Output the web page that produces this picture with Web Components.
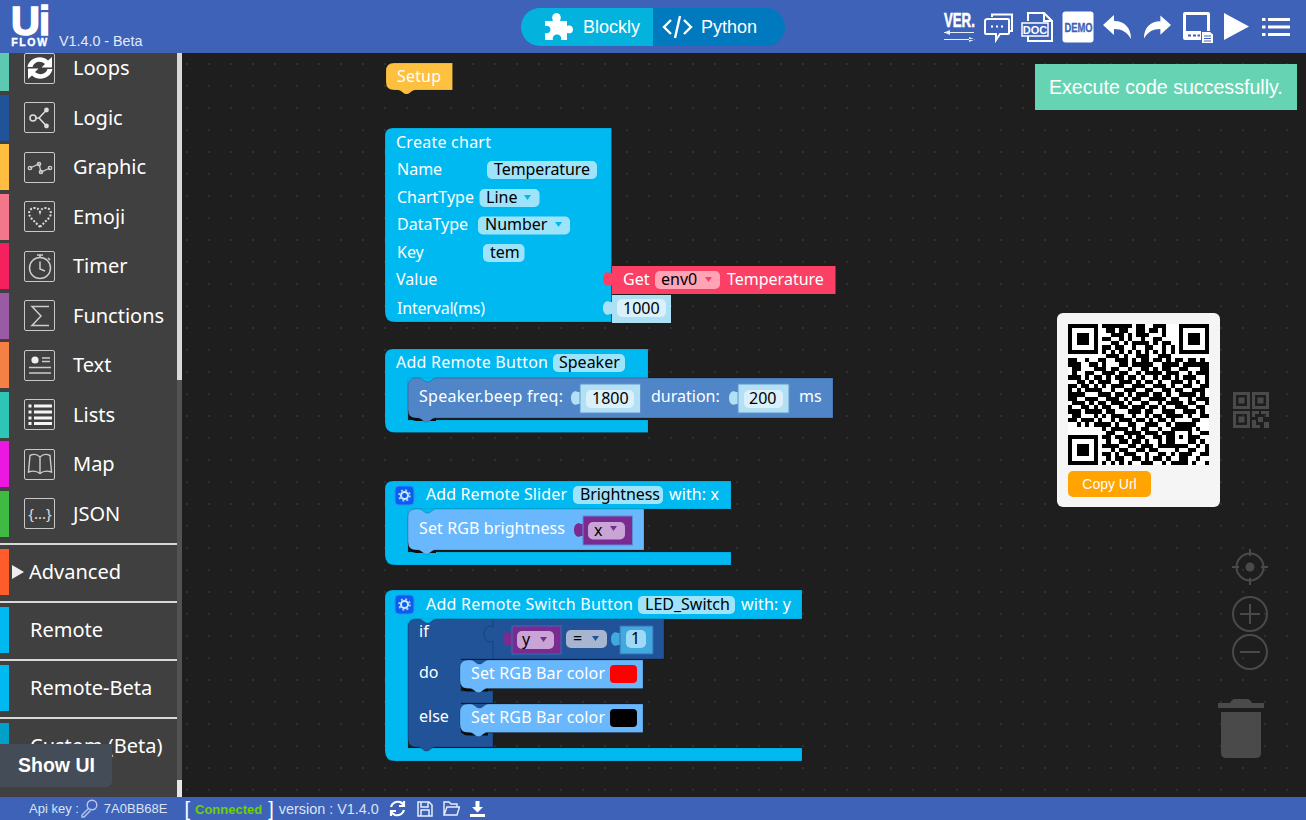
<!DOCTYPE html>
<html>
<head>
<meta charset="utf-8">
<title>UiFlow</title>
<style>
  html, body { margin: 0; height: 100%; background: #1e1e1e; overflow: hidden; }
  body { display: flex; flex-direction: column; width: 1306px; height: 820px; font-family: 'Liberation Sans', Arial, sans-serif; }
  .main { display: flex; height: 744px; }
  svg { display: block; }
</style>
</head>
<body>
<uf-header></uf-header>
<div class="main">
  <uf-sidebar>
    <tool-item color="#5cc9b0" label="Loops" first><svg viewBox="0 0 28 28" fill="none"><path d="M1.500 13 C3 4 15 0 22 6.500 L26 3 V13.500 H15.500 L19 10 C14 6 8 8 6.500 13Z M26.500 15 C25 24 13 28 6 21.500 L2 25 V14.500 H12.500 L9 18 C14 22 20 20 21.500 15Z" fill="#fff"/></svg></tool-item>
    <tool-item color="#205398" label="Logic"><svg viewBox="0 0 28 28" fill="none" stroke="#ddd" stroke-width="1.6"><circle cx="7" cy="14" r="3"/><path d="M10 14 H13 L20 6.500 M13 14 L20 21.500"/><circle cx="20.500" cy="6" r="1.600" fill="#ddd"/><circle cx="20.500" cy="22" r="1.600" fill="#ddd"/></svg></tool-item>
    <tool-item color="#ffbe3f" label="Graphic"><svg viewBox="0 0 28 28" fill="none" stroke="#ccc" stroke-width="1.3"><path d="M4 15 L13 11 L15 19 L24 15"/><circle cx="4" cy="15" r="1.700"/><circle cx="13" cy="11" r="1.700"/><circle cx="15" cy="19" r="1.700"/><circle cx="24" cy="15" r="1.700"/></svg></tool-item>
    <tool-item color="#f2778a" label="Emoji"><svg viewBox="0 0 28 28" fill="none"><path d="M14 24 L5 15 C1 10 4 5 8 5 C11 5 13 6 14 9 C15 6 17 5 20 5 C24 5 27 10 23 15Z" stroke="#ddd" stroke-width="2" stroke-dasharray="2 1.600"/></svg></tool-item>
    <tool-item color="#f5205f" label="Timer"><svg viewBox="0 0 28 28" fill="none" stroke="#ccc" stroke-width="1.500"><circle cx="14" cy="16" r="10.500"/><path d="M11 3 H17 M14 3 V5.500 M14 9.500 V17 L19 19 M22 6 L24 8"/></svg></tool-item>
    <tool-item color="#9a5ba5" label="Functions"><svg viewBox="0 0 28 28" fill="none" stroke="#ccc" stroke-width="1.500"><path d="M23 4.500 H6 L15 14 L6 23.500 H23"/></svg></tool-item>
    <tool-item color="#f58045" label="Text"><svg viewBox="0 0 28 28" fill="none" stroke="#ccc" stroke-width="1.300"><circle cx="9" cy="9" r="3.600" fill="#eee" stroke="none"/><path d="M16 7 H24 M16 10.500 H24 M3 16.500 H25 M3 22 H25"/></svg></tool-item>
    <tool-item color="#2ec4b6" label="Lists"><svg viewBox="0 0 28 28" fill="#f4f4f4"><rect x="2.500" y="3.500" width="3" height="3"/><rect x="2.500" y="9.500" width="3" height="3"/><rect x="2.500" y="15.500" width="3" height="3"/><rect x="2.500" y="21" width="3" height="3"/><rect x="8" y="3.500" width="18" height="3"/><rect x="8" y="9.500" width="18" height="3"/><rect x="8" y="15.500" width="18" height="3"/><rect x="8" y="21" width="18" height="3"/></svg></tool-item>
    <tool-item color="#ea18e0" label="Map"><svg viewBox="0 0 28 28" fill="none" stroke="#ccc" stroke-width="1.400"><path d="M14 7 C11 4 7 4 4 5.500 L2.500 22 C7 20.500 11 21 14 23.500 C17 21 21 20.500 25.500 22 L24 5.500 C21 4 17 4 14 7 V23.500"/></svg></tool-item>
    <tool-item color="#3fba42" label="JSON"><svg viewBox="0 0 28 28"><text x="14" y="19" font-size="15" font-family="'Noto Sans', sans-serif" text-anchor="middle" fill="#ddd">{...}</text></svg></tool-item>
    <cat-item color="#ff5c2b" label="Advanced" arrow></cat-item>
    <cat-item color="#00b9f0" label="Remote"></cat-item>
    <cat-item color="#00b9f0" label="Remote-Beta"></cat-item>
    <cat-item color="#00a0c8" label="Custom (Beta)"></cat-item>
  </uf-sidebar>
  <uf-workspace>
    <uf-toast>Execute code successfully.</uf-toast>
    <qr-card></qr-card>
    <zoom-controls></zoom-controls>
  </uf-workspace>
</div>
<uf-statusbar></uf-statusbar>

<script>
class UfHeader extends HTMLElement {
  constructor() {
    super();
    this.attachShadow({ mode: 'open' }).innerHTML = `
    <style>
      :host { display: flex; align-items: stretch; height: 53px; background: #3d62b8; position: relative; flex: none; color: #fff; font-family: 'Liberation Sans', sans-serif; }
      .logo { width: 38px; margin-left: 11px; display: flex; flex-direction: column; align-items: center; }
      .ui { font-size: 40px; line-height: 30px; height: 30px; margin-top: 6px; font-weight: 700; -webkit-text-stroke: 1.500px #fff; letter-spacing: -1px; }
      .flow { font-size: 10.500px; line-height: 10px; margin-top: 1px; font-weight: 700; letter-spacing: 1.700px; -webkit-text-stroke: .4px #fff; }
      .ver { font-size: 14.300px; margin-left: 10px; align-self: flex-end; padding-bottom: 4px; line-height: 16px; color: #e4eaf7; width: 89px; white-space: nowrap; }
      .tabs { display: flex; margin: 8px 0 7px 373px; height: 38px; border-radius: 19px; overflow: hidden; font-size: 18px; }
      .tab { display: flex; align-items: center; box-sizing: border-box; }
      .blockly { width: 132px; background: #03b3de; padding-left: 23px; gap: 10px; }
      .python { width: 132px; background: #0079be; padding-left: 9px; gap: 8px; }
      .tools { display: flex; align-items: center; margin-left: 158px; }
      .tools svg { flex: none; overflow: visible; }
    </style>
    <div class="logo"><span class="ui">Ui</span><span class="flow">FLOW</span></div>
    <span class="ver">V1.4.0 - Beta</span>
    <div class="tabs">
      <div class="tab blockly">
        <svg width="29" height="30" viewBox="0 0 29 30"><path d="M1 9 H9 C7 5 9 1 12.500 1 C16 1 18 5 16 9 H23 V14 C27 12.500 29 15 29 17.500 C29 21 26 22 23 21 V28 H17 C18 25 16 22.500 13 22.500 C10 22.500 8 25 9 28 H1 V21 C4 22 6.500 20 6.500 17.500 C6.500 15 4 13 1 14Z" fill="#fff"/></svg>
        <span>Blockly</span>
      </div>
      <div class="tab python">
        <svg width="31" height="24" viewBox="0 0 31 24" fill="none" stroke="#fff" stroke-width="2.400"><path d="M9 5 L2 12 L9 19 M22 5 L29 12 L22 19 M18 1 L13 23"/></svg>
        <span>Python</span>
      </div>
    </div>
    <div class="tools">
      <svg width="33" height="32" viewBox="0 0 33 32"><text transform="translate(1 15.500) scale(.66 1)" font-size="20" font-weight="700" font-family="'Liberation Sans',sans-serif" fill="#fff" stroke="#fff" stroke-width=".6">VER.</text><path d="M1 21 H31 V22 H1Z M1 21.500 L7 19 V24Z M1 28 H31 V29 H1Z M32 28.500 L26 26 V31Z" fill="#e8eefa"/></svg>
      <svg width="31" height="32" viewBox="0 0 31 32" fill="none" stroke="#fff" stroke-width="2" style="margin-left:7px"><path d="M9 6 V3.500 H29 V20 H26"/><path d="M5 8 H25 Q26 8 26 9 V22 Q26 23 25 23 H17 L13 29 V23 H3 Q2 23 2 22 V10 Q2 8 5 8Z"/><path d="M8 15.500 H10 M13 15.500 H15 M18 15.500 H20"/></svg>
      <svg width="32" height="32" viewBox="0 0 32 32" style="margin-left:8px"><path d="M6 10 V2 H22 L30 10 V30 H6 V25" fill="none" stroke="#fff" stroke-width="2"/><path d="M22 2 V10 H30" fill="none" stroke="#fff" stroke-width="2"/><rect x="0" y="12" width="26" height="13" fill="#3d62b8" stroke="#fff" stroke-width="1.500"/><text x="13" y="22.500" font-size="11" font-weight="700" font-family="'Liberation Sans',sans-serif" text-anchor="middle" fill="#fff">DOC</text></svg>
      <svg width="32" height="32" viewBox="0 0 32 32" style="margin-left:8px"><rect x=".5" y=".5" width="31" height="31" rx="3" fill="#fff"/><text transform="translate(2.500 20.500) scale(.78 1)" font-size="12" font-weight="700" font-family="'Liberation Sans',sans-serif" fill="#3d62b8" stroke="#3d62b8" stroke-width=".3">DEMO</text></svg>
      <svg width="29" height="24" viewBox="0 0 29 24" style="margin-left:9px"><path d="M0 10 L11 0 V6 C22 6 28 13 28 24 C24 17 19 14 11 14 V20Z" fill="#fff"/></svg>
      <svg width="28" height="24" viewBox="0 0 29 24" style="margin-left:11px"><path d="M29 10 L18 0 V6 C7 6 1 13 1 24 C5 17 10 14 18 14 V20Z" fill="#fff"/></svg>
      <svg width="31" height="32" viewBox="0 0 31 32" style="margin-left:11px"><path d="M3 1 H26 Q28 1 28 3 V20 H25 V4 H4 V20 H19 V29 H3 Q1 29 1 27 V3 Q1 1 3 1Z" fill="#fff"/><path d="M6 24.500 H9 M11 24.500 H14 M15.500 24.500 H18" stroke="#3d62b8" stroke-width="2"/><path d="M20 21 H28 L31 23.500 V32 H20Z" fill="#fff"/><path d="M22 25 H29 M22 27.500 H29 M22 30 H29" stroke="#3d62b8" stroke-width="1"/></svg>
      <svg width="25" height="27" viewBox="0 0 25 27" style="margin-left:11px"><path d="M0 0 L25 13.500 L0 27Z" fill="#fff"/></svg>
      <svg width="28" height="20" viewBox="0 0 28 20" style="margin-left:13px"><g fill="#fff"><rect x="0" y="1" width="3.500" height="3"/><rect x="0" y="8.500" width="3.500" height="3"/><rect x="0" y="16" width="3.500" height="3"/><rect x="6" y="1" width="22" height="3"/><rect x="6" y="8.500" width="22" height="3"/><rect x="6" y="16" width="22" height="3"/></g></svg>
    </div>`;
  }
}
customElements.define('uf-header', UfHeader);

class ToolItem extends HTMLElement {
  constructor() {
    super();
    const root = this.attachShadow({ mode: 'open' });
    root.innerHTML = `
    <style>
      :host { display: flex; align-items: center; height: 49.500px; position: relative; color: #fff; font: 20px 'Noto Sans', sans-serif; }
      .strip { width: 9px; height: 46px; flex: none; background: var(--c); }
      .box { width: 31px; height: 31px; box-sizing: border-box; border: 1.500px solid #c8c8c8; border-radius: 2px; margin-left: 15px; display: flex; align-items: center; justify-content: center; flex: none; }
      ::slotted(svg) { width: 28px; height: 28px; display: block; }
      .label { margin-left: 18px; white-space: nowrap; padding-bottom: 1px; }
    </style>
    <div class="strip"></div><div class="box"><slot></slot></div><span class="label"></span>`;
    root.querySelector('.label').textContent = this.getAttribute('label');
    root.querySelector('.strip').style.setProperty('--c', this.getAttribute('color'));
  }
}
customElements.define('tool-item', ToolItem);

class CatItem extends HTMLElement {
  constructor() {
    super();
    const root = this.attachShadow({ mode: 'open' });
    root.innerHTML = `
    <style>
      :host { display: flex; align-items: center; height: 58px; box-sizing: border-box; border-top: 2px solid #d8d8d8; color: #fff; font: 20px 'Noto Sans', sans-serif; }
      :host([arrow]) { margin-top: 4.750px; }
      .strip { width: 9px; height: 46px; flex: none; background: var(--c); margin-bottom: 2px; }
      .arrow { width: 0; height: 0; border-left: 12px solid #eee; border-top: 7.500px solid transparent; border-bottom: 7.500px solid transparent; margin: 0 0 2px 3px; }
      .label { margin-left: 21px; white-space: nowrap; margin-bottom: 4px; }
      .arrow + .label { margin-left: 5px; }
    </style>
    <div class="strip"></div>${this.hasAttribute('arrow') ? '<div class="arrow"></div>' : ''}<span class="label"></span>`;
    root.querySelector('.label').textContent = this.getAttribute('label');
    root.querySelector('.strip').style.setProperty('--c', this.getAttribute('color'));
  }
}
customElements.define('cat-item', CatItem);

class UfSidebar extends HTMLElement {
  constructor() {
    super();
    this.attachShadow({ mode: 'open' }).innerHTML = `
    <style>
      :host { display: block; width: 182px; height: 744px; flex: none; position: relative; overflow: hidden; background: #404040; }
      .list { width: 177px; margin-top: -9.750px; }
      .track { position: absolute; right: 0; top: 0; bottom: 0; width: 5px; background: #525252; }
      .thumb { position: absolute; left: 0; right: 0; top: 0; height: 327px; background: #d9d9d9; }
      .thumb.end { top: 727px; height: 17px; background: #e6e6e6; }
      .show { position: absolute; left: 0; top: 691px; width: 112px; height: 43px; background: #434c57; border-radius: 0 0 6px 0; color: #fff; font: 700 19.500px 'Liberation Sans', sans-serif; line-height: 43px; padding-left: 18px; box-sizing: border-box; }
    </style>
    <div class="list"><slot></slot></div>
    <div class="track"><div class="thumb"></div><div class="thumb end"></div></div>
    <div class="show">Show UI</div>`;
  }
}
customElements.define('uf-sidebar', UfSidebar);

const tab = (x, y, fill) => `<path d="M${x} ${y+1} h-2 c-3 -2 -7 0 -7 6 s4 8 7 6 h2Z" fill="${fill}"/>`;
const txt = (x, y, s, fill = '#fff', w) => `<text x="${x}" y="${y}" fill="${fill}"${w ? ` textLength="${w}"` : ''}>${s}</text>`;
const field = (x, y, w, h, fill, r = 5) => `<rect x="${x}" y="${y}" width="${w}" height="${h}" rx="${r}" fill="${fill}"/>`;
const arrow = (x, y, fill) => `<path d="M${x} ${y} h7 l-3.500 5Z" fill="${fill}"/>`;
const stmtPath = (x, y, w, h) => `M${x} ${y+8} Q${x} ${y} ${x+8} ${y} H${x+11} q2 0 3.500 1.500 l2 1.500 q1 1 2 1 h2 q1 0 2 -1 l2 -1.500 q1.500 -1.500 3.500 -1.500 H${x+w} V${y+h} H${x+27} q-2 0 -3.500 1.500 l-2 1.500 q-1 1 -2 1 h-2 q-1 0 -2 -1 l-2 -1.500 q-1.500 -1.500 -3.500 -1.500 H${x+8} Q${x} ${y+h} ${x} ${y+h-8}Z`;
const stmt = (x, y, w, h, fill) => `<path d="M${x} ${y+h-8} Q${x} ${y+h+3} ${x+8} ${y+h+3} H${x+28} V${y+h-4} H${x}Z" fill="#0c0c0c"/><path d="${stmtPath(x, y, w, h)}" fill="${fill}" stroke="rgba(0,0,0,.18)"/>`;
const corner = (x, y, fill) => `<rect x="${x}" y="${y}" width="30" height="5" fill="${fill}"/><rect x="${x}" y="${y}" width="10" height="9" fill="${fill}"/>`;
const cblock = (x, y, w, head, inX, barY, barB, fill) => `<path d="M${x} ${y+8} Q${x} ${y} ${x+8} ${y} H${x+w} V${y+head} H${inX} V${barY} H${x+w} V${barB} H${x+10} Q${x} ${barB} ${x} ${barB-10}Z" fill="${fill}" stroke="rgba(0,0,0,.12)"/>${corner(inX, y+head, fill)}`;
const gear = (x, y) => `<rect x="${x}" y="${y}" width="19" height="19" rx="4" fill="#0a5dee" stroke="#2f8cff"/><circle cx="${x+9.5}" cy="${y+9.5}" r="5.300" fill="none" stroke="#9fd0ff" stroke-width="2" stroke-dasharray="2 2.160"/><circle cx="${x+9.5}" cy="${y+9.5}" r="3.500" fill="none" stroke="#cfe6ff" stroke-width="2"/>`;

class UfWorkspace extends HTMLElement {
  constructor() {
    super();
    const c = '#00b9f0', f = '#9de4fb', light = '#69b7fc', dark = '#205398', purple = '#7b2a92', lilac = '#c9a5d6';
    this.attachShadow({ mode: 'open' }).innerHTML = `
    <style>
      :host { display: block; position: relative; flex: 1; height: 744px; background: #1e1e1e; overflow: hidden; }
      svg { display: block; position: absolute; inset: 0; font: 16px 'Noto Sans', sans-serif; }
    </style>
    <svg width="1124" height="744" viewBox="182 53 1124 744">
      <defs>
        <pattern id="dots" x="186" y="63" width="22" height="22" patternUnits="userSpaceOnUse"><circle cx="1" cy="1" r=".8" fill="#464646"/></pattern>
      </defs>
      <rect x="182" y="53" width="1124" height="744" fill="url(#dots)"/>

      <!-- Setup -->
      <path d="M386 71 Q386 63 394 63 H452.500 V90 H415 q-2 0 -3.500 1.500 l-2 1.500 q-1 1 -2 1 h-2 q-1 0 -2 -1 l-2 -1.500 q-1.500 -1.500 -3.500 -1.500 H394 Q386 90 386 82Z" fill="#fec03f" stroke="rgba(0,0,0,.12)"/>
      ${txt(397, 82, 'Setup', '#fff', 44)}

      <!-- Create chart -->
      <path d="M385 136 Q385 128 393 128 H611.500 V322 H395 Q385 322 385 312Z" fill="${c}" stroke="rgba(0,0,0,.12)"/>
      ${txt(396, 148, 'Create chart', '#fff', 95)}
      ${txt(397, 175, 'Name')}
      ${field(487, 161, 110, 18, f)}${txt(494, 175, 'Temperature', '#000', 96)}
      ${txt(397, 203, 'ChartType')}
      ${field(479.5, 189, 60, 18, f)}${txt(486, 203, 'Line', '#000')}${arrow(524, 195, c)}
      ${txt(397, 230, 'DataType')}
      ${field(478, 216.5, 92, 18, f)}${txt(485, 230, 'Number', '#000')}${arrow(555, 222, c)}
      ${txt(397, 258, 'Key')}
      ${field(483, 244, 41.5, 18, f)}${txt(490, 258, 'tem', '#000')}
      ${txt(396, 285, 'Value')}
      ${txt(397, 314, 'Interval(ms)', '#fff', 88)}
      ${tab(612, 272, '#fc3f65')}<rect x="612" y="266" width="223.500" height="28" fill="#fc3f65"/>
      ${txt(623, 285, 'Get')}${field(655, 271, 65, 18, '#ffa3b5')}${txt(661, 285, 'env0', '#000')}${arrow(705, 277, '#fc3f65')}${txt(727, 285, 'Temperature')}
      ${tab(612, 301, '#ace0f5')}<rect x="612" y="295" width="59" height="28" fill="#ace0f5"/>
      ${field(617, 299, 49, 18, '#daf0fb')}${txt(623, 314, '1000', '#000')}

      <!-- Add Remote Button -->
      ${cblock(385, 349, 263, 29, 408, 420, 432.500, c)}
      ${txt(396, 368, 'Add Remote Button', '#fff', 152)}
      ${field(553, 354, 72, 18, f)}${txt(559, 368, 'Speaker', '#000')}
      ${stmt(408, 378, 425, 40, '#5086c7')}
      ${txt(419, 402, 'Speaker.beep freq:', '#fff', 144)}
      ${tab(580, 391, '#b4e0f5')}<rect x="580" y="384" width="60.500" height="29" fill="#b4e0f5" stroke="#5f93c9"/>
      ${field(586, 390, 48, 18, '#daf0fb')}${txt(592, 404, '1800', '#000')}
      ${txt(651, 402, 'duration:')}
      ${tab(738, 391, '#b4e0f5')}<rect x="738" y="384" width="51" height="29" fill="#b4e0f5" stroke="#5f93c9"/>
      ${field(744, 390, 39, 18, '#daf0fb')}${txt(749, 404, '200', '#000')}
      ${txt(799, 402, 'ms')}

      <!-- Add Remote Slider -->
      ${cblock(385, 481, 346, 28, 408, 552, 565, c)}
      ${gear(395, 486)}
      ${txt(426, 500, 'Add Remote Slider', '#fff', 141)}
      ${field(573, 486, 90, 18, f)}${txt(580, 500, 'Brightness', '#000', 80)}
      ${txt(669, 500, 'with: x', '#fff', 50)}
      ${stmt(408, 509, 236, 41, light)}
      ${txt(419, 534, 'Set RGB brightness', '#fff', 146)}
      ${tab(583, 523, purple)}<rect x="583" y="516" width="49.500" height="29" fill="${purple}" stroke="#5a8fd0"/>
      ${field(588, 522, 37, 17.500, lilac)}${txt(594, 536, 'x', '#000')}${arrow(610, 526, purple)}

      <!-- Add Remote Switch Button -->
      ${cblock(385, 590, 417, 29, 408, 748, 761, c)}
      ${gear(395, 595)}
      ${txt(426, 610, 'Add Remote Switch Button', '#fff', 207)}
      ${field(638, 596, 97, 18, f)}${txt(645, 610, 'LED_Switch', '#000')}
      ${txt(741, 610, 'with: y', '#fff', 50)}
      <path d="M408 627 Q408 619 416 619 H419 q2 0 3.500 1.500 l2 1.500 q1 1 2 1 h2 q1 0 2 -1 l2 -1.500 q1.500 -1.500 3.500 -1.500 H664 V659 H461 V691 H493 V703 H461 V733 H493 V747 H435 q-2 0 -3.500 1.500 l-2 1.500 q-1 1 -2 1 h-2 q-1 0 -2 -1 l-2 -1.500 q-1.500 -1.500 -3.500 -1.500 H416 Q408 747 408 739Z" fill="${dark}" stroke="rgba(0,0,0,.18)"/>
      <path d="M493 619 V627 c-3 -2 -9 -1 -9 7 s6 9 9 7 V659" fill="none" stroke="#17437f"/>
      ${txt(419, 637, 'if')}${txt(419, 678, 'do')}${txt(419, 722, 'else')}
      ${tab(512, 632, purple)}<rect x="512" y="626" width="49" height="28" fill="${purple}" stroke="#3a6cb0"/>
      ${field(517, 631, 37, 18, lilac)}${txt(522, 645, 'y', '#000')}${arrow(540, 637, purple)}
      ${field(566, 630, 41, 18, '#a6b5d0')}${txt(573, 644, '=', '#000')}${arrow(592, 636, dark)}
      ${tab(620, 632, '#3fa9e0')}<rect x="620" y="626" width="33" height="28" fill="#3fa9e0" stroke="#3a6cb0"/>
      ${field(626, 630, 20, 18, '#9fd9f5')}${txt(631, 644, '1', '#000')}
      ${corner(460, 660, dark)}${stmt(460, 660, 183, 28.500, light)}
      ${txt(471, 679, 'Set RGB Bar color', '#fff', 134)}${field(610, 665, 27, 18, '#ff0000', 4)}
      ${corner(460, 704, dark)}${stmt(460, 704, 183, 28.500, light)}
      ${txt(471, 723, 'Set RGB Bar color', '#fff', 134)}${field(610, 709, 27, 18, '#000', 4)}
    </svg>
    <slot></slot>`;
  }
}
customElements.define('uf-workspace', UfWorkspace);

class UfToast extends HTMLElement {
  constructor() {
    super();
    this.attachShadow({ mode: 'open' }).innerHTML = `
    <style>
      :host { display: block; position: absolute; left: 853px; top: 11px; width: 262px; height: 46px; box-sizing: border-box; background: #66d4b3; color: #fff; font: 19.600px/46px 'Liberation Sans', sans-serif; padding-left: 14px; white-space: nowrap; }
    </style><slot></slot>`;
  }
}
customElements.define('uf-toast', UfToast);

class QrCard extends HTMLElement {
  constructor() {
    super();
    const rows = [
      '111111101111111011001110001111111',
      '100000100110110011011010001000001',
      '101110100011101011100010001011101',
      '101110101100101001001100001011101',
      '101110100011010111101011001011101',
      '100000101101100100110010101000001',
      '111111101010101010101010101111111',
      '000000000111010011100111000000000',
      '110010011001110101101101011011010',
      '111001101000110111110011110111111',
      '011000111011001001101011001100011',
      '010011001110110010111101110010111',
      '111010110101101101001011010111001',
      '001101011100111010110100111010101',
      '110110101011100111001110100110011',
      '101011110010011100110011011001110',
      '111100011101101011101101001111010',
      '110011100111010110011110110010111',
      '011101011011101001100101111011001',
      '100110101100110111011010011100110',
      '111011110110001110110011100111010',
      '011000101011100100101101111010011',
      '110111010010111011010110100001100',
      '001010111101001100111001011111000',
      '000000001011110101100100111110100',
      '111111100110011110111011100010011',
      '100000101101101011001101101011100',
      '101110100100110110100101100011010',
      '101110101111001101110111111100101',
      '101110100010110011011000010011001',
      '100000101101011100100110101110011',
      '100000100101100110101101001100100',
      '111111101010101001110010111101001'];
    const on = (r, c) => {
      const fin = (a, b) => {
        const y = r - a, x = c - b;
        if (y < -1 || x < -1 || y > 7 || x > 7) return null;
        if (y < 0 || x < 0 || y > 6 || x > 6) return false;
        return y === 0 || x === 0 || y === 6 || x === 6 || (y > 1 && y < 5 && x > 1 && x < 5);
      };
      for (const [a, b] of [[0, 0], [0, 26], [26, 0]]) {
        const v = fin(a, b);
        if (v !== null) return v;
      }
      return rows[r][c] === '1';
    };
    let cells = '';
    for (let r = 0; r < 33; r++) for (let c = 0; c < 33; c++) {
      if (on(r, c)) cells += `M${c} ${r}h1v1h-1z`;
    }
    this.attachShadow({ mode: 'open' }).innerHTML = `
    <style>
      :host { display: block; position: absolute; left: 875px; top: 260px; width: 163px; height: 194px; box-sizing: border-box; background: #f5f5f5; border-radius: 6px; padding: 11px; }
      svg { display: block; background: #fff; }
      button { display: block; margin-top: 6px; width: 83px; height: 26px; border: 0; border-radius: 5px; background: #ffa400; color: #fff; font: 14px 'Liberation Sans', sans-serif; padding: 0; }
    </style>
    <svg width="141" height="141" viewBox="0 0 33 33" shape-rendering="crispEdges"><path d="${cells}" fill="#000"/></svg>
    <button type="button">Copy Url</button>`;
  }
}
customElements.define('qr-card', QrCard);

class ZoomControls extends HTMLElement {
  constructor() {
    super();
    this.attachShadow({ mode: 'open' }).innerHTML = `
    <style>
      :host { display: block; position: absolute; left: 1036px; top: 339px; width: 60px; height: 420px; }
      svg { display: block; }
    </style>
    <svg width="60" height="420" viewBox="1218 392 60 420" fill="none" stroke="#4a4a4a">
      <g fill="#4a4a4a" stroke="none">
        <path d="M1233 392 h17 v17 h-17z M1236 395 v11 h11 v-11z" fill-rule="evenodd"/><rect x="1238.500" y="397.500" width="6" height="6"/>
        <path d="M1252 392 h17 v17 h-17z M1255 395 v11 h11 v-11z" fill-rule="evenodd"/><rect x="1257.500" y="397.500" width="6" height="6"/>
        <path d="M1233 411 h17 v17 h-17z M1236 414 v11 h11 v-11z" fill-rule="evenodd"/><rect x="1238.500" y="416.500" width="6" height="6"/>
        <path d="M1252 411 h7 v3 h-4 v3 h-3z M1261 411 h8 v6 h-3 v-3 h-5z M1258 417 h5 v5 h-5z M1252 420 h4 v5 h4 v3 h-8z M1264 422 h5 v6 h-5z"/>
      </g>
      <circle cx="1250" cy="567" r="13.500" stroke-width="2"/>
      <circle cx="1250" cy="567" r="4.500" fill="#4a4a4a" stroke="none"/>
      <path d="M1250 549 V556 M1250 578 V585 M1232 567 H1239 M1261 567 H1268" stroke-width="2"/>
      <circle cx="1250" cy="614" r="17" stroke-width="2"/>
      <path d="M1250 604 V624 M1240 614 H1260" stroke-width="2"/>
      <circle cx="1250" cy="652" r="17" stroke-width="2"/>
      <path d="M1240 652 H1260" stroke-width="2"/>
      <path d="M1218 708 V703 H1230 Q1232 699 1235 699 H1247 Q1250 699 1252 703 H1264 V708Z M1221 712 H1261 V753 Q1261 758 1256 758 H1226 Q1221 758 1221 753Z" fill="#4a4a4a" stroke="none"/>
    </svg>`;
  }
}
customElements.define('zoom-controls', ZoomControls);

class UfStatusbar extends HTMLElement {
  constructor() {
    super();
    this.attachShadow({ mode: 'open' }).innerHTML = `
    <style>
      :host { display: flex; align-items: center; height: 23px; background: #3d62b8; flex: none; color: #dbe3f5; font: 13px 'Liberation Sans', sans-serif; padding-left: 29px; white-space: nowrap; }
      .key { margin: 0 6px 0 1px; }
      .br { color: #fff; font-size: 20px; margin-left: 17px; line-height: 20px; }
      .br.end { margin-left: 6px; }
      .ok { color: #6fd000; font-weight: 700; font-size: 13px; margin-left: 5px; margin-top: 2px; }
      .v { font-size: 14.400px; margin-left: 5px; }
      svg { flex: none; display: block; }
    </style>
    <span>Api key :</span>
    <svg class="key" width="18" height="19" viewBox="0 0 18 19" fill="none" stroke="#b8c8ec" stroke-width="1.400"><circle cx="12" cy="6" r="4.800"/><path d="M8.500 9.500 L2 16 V18 H4 L10.500 11.500"/></svg>
    <span>7A0BB68E</span>
    <span class="br">[</span><span class="ok">Connected</span><span class="br end">]</span>
    <span class="v">version : V1.4.0</span>
    <svg style="margin-left:10px" width="17" height="17" viewBox="0 0 17 17" fill="none" stroke="#fff" stroke-width="2.200"><path d="M2 7 C3 3 7 1 11 2 C13 3 14 4 15 5 M15 1 V6 H10 M15 10 C14 14 10 16 6 15 C4 14 3 13 2 12 M2 16 V11 H7"/></svg>
    <svg style="margin-left:11px" width="16" height="16" viewBox="0 0 16 16" fill="none" stroke="#e8eefa" stroke-width="1.500"><path d="M1 1 H12 L15 4 V15 H1Z M4 1 V6 H11 V1 M4 15 V9 H12 V15"/></svg>
    <svg style="margin-left:10px" width="17" height="15" viewBox="0 0 17 15" fill="none" stroke="#e8eefa" stroke-width="1.400"><path d="M1 14 V1 H6 L8 3 H14 V6 M1 14 L4 6 H16.500 L14 14Z"/></svg>
    <svg style="margin-left:10px" width="15" height="16" viewBox="0 0 15 16"><path d="M5.500 0 H9.500 V6 H13 L7.500 11.500 L2 6 H5.500Z M0 13 H15 V16 H0Z" fill="#fff"/></svg>`;
  }
}
customElements.define('uf-statusbar', UfStatusbar);
</script>
</body>
</html>
